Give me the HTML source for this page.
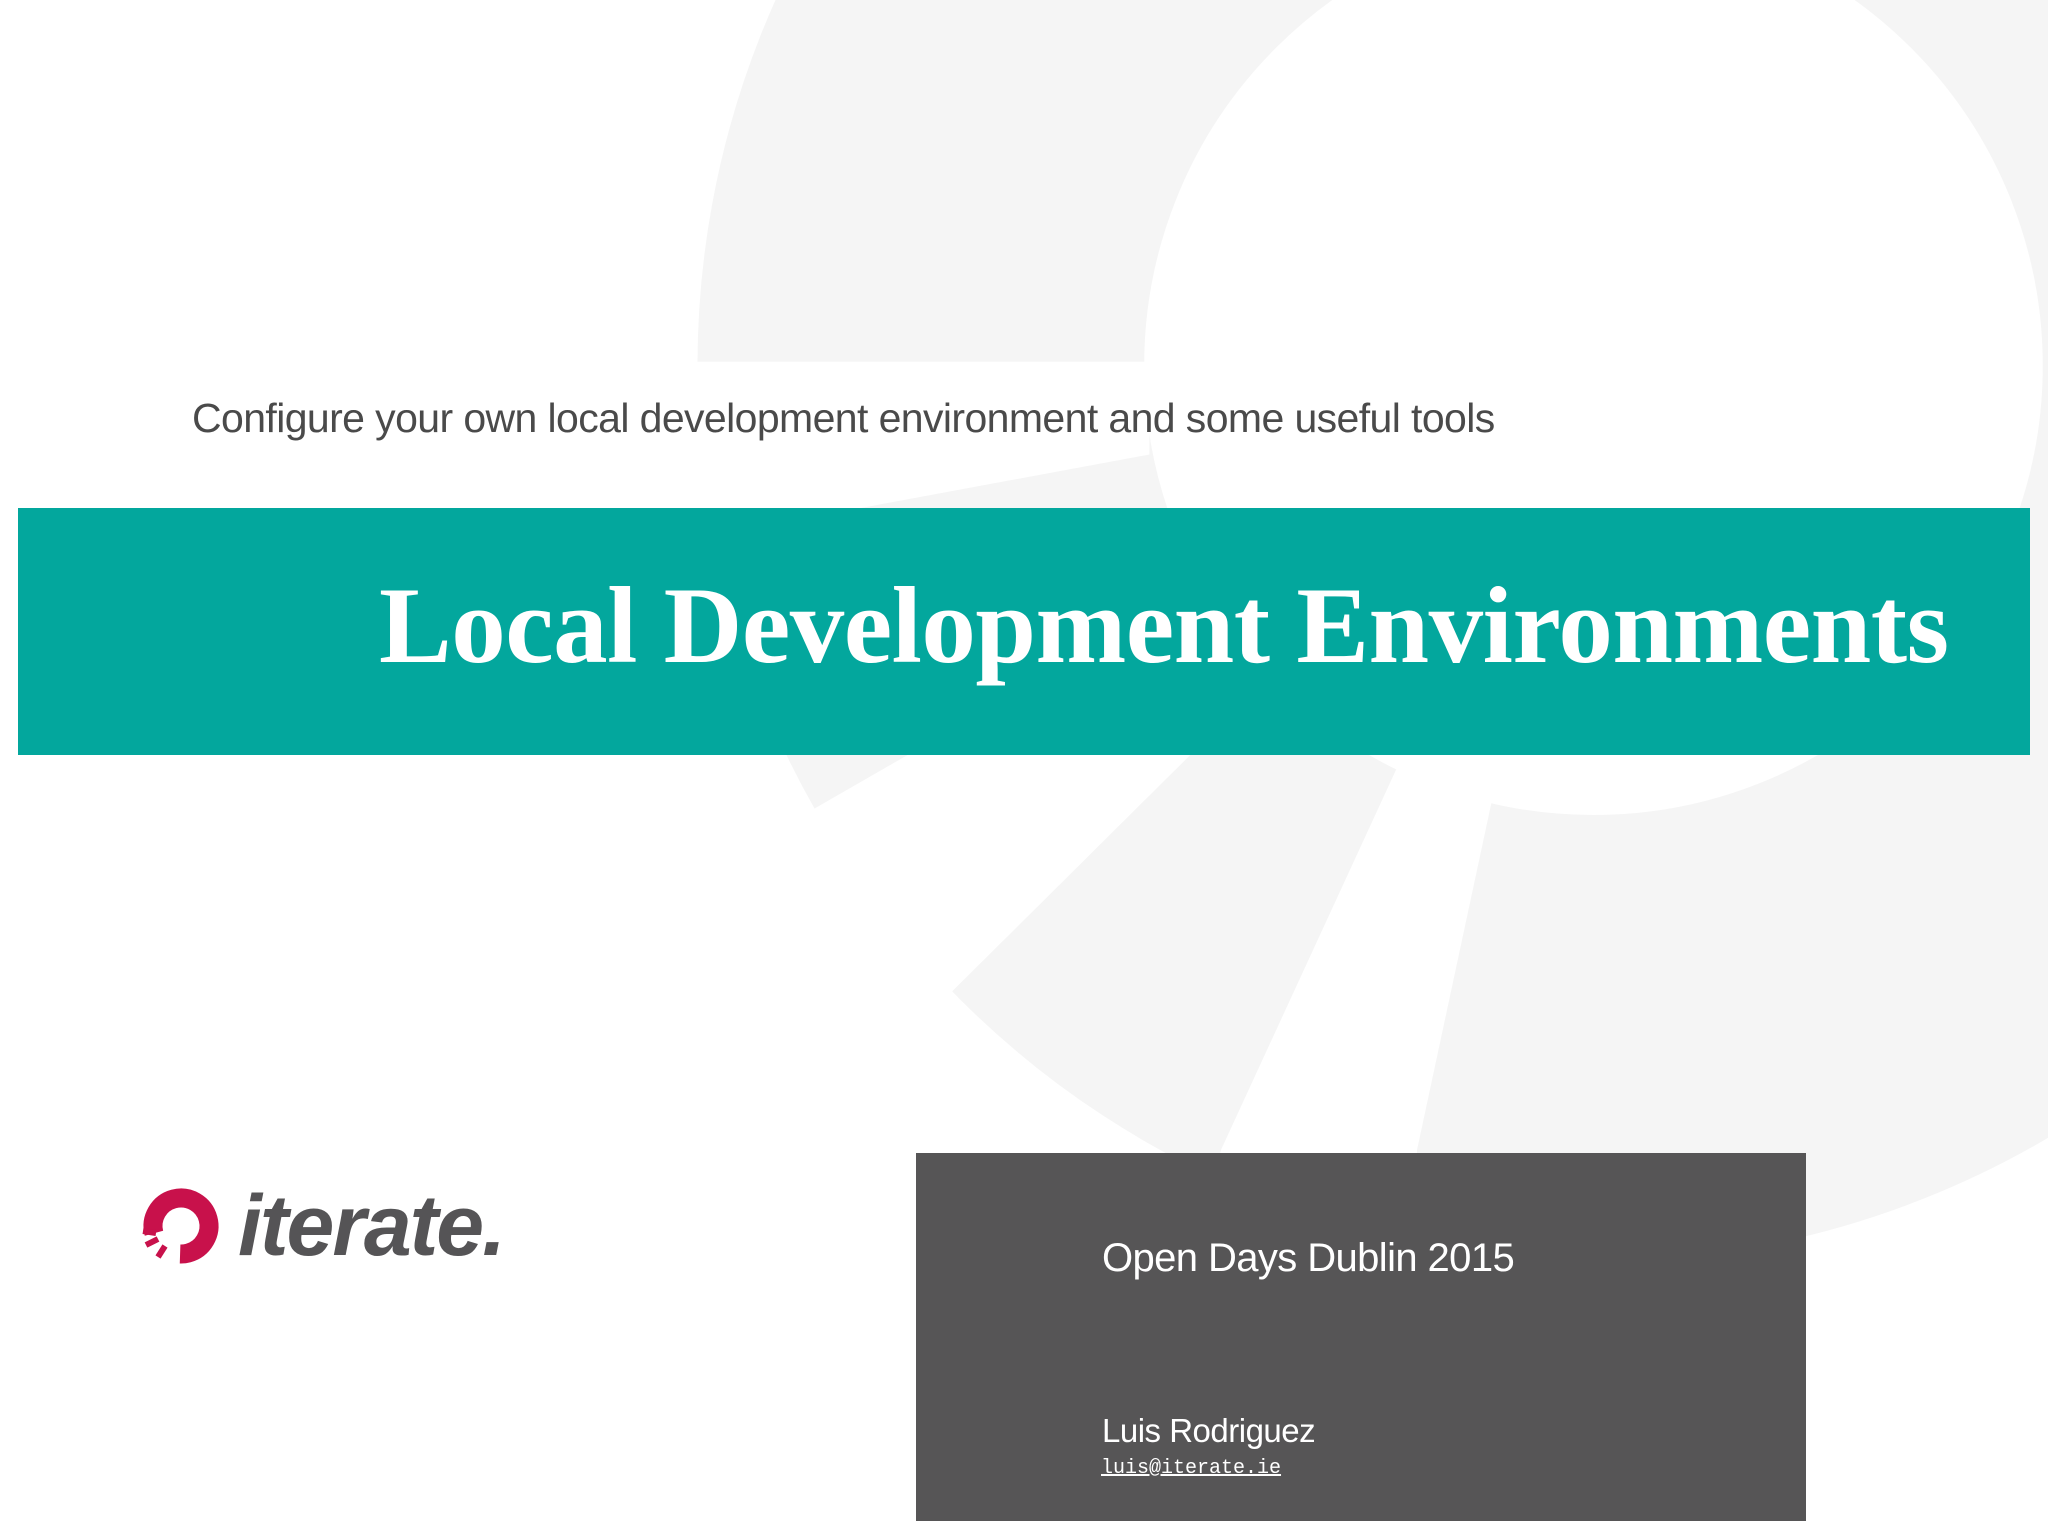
<!DOCTYPE html>
<html><head><meta charset="utf-8"><style>
html,body{margin:0;padding:0;}
body{width:2048px;height:1536px;position:relative;overflow:hidden;background:#fff;font-family:"Liberation Sans",sans-serif;}
svg.bg{position:absolute;left:0;top:0;}
.t{position:absolute;white-space:nowrap;line-height:1;}
</style></head><body>
<svg class="bg" width="2048" height="1536" viewBox="0 0 1568 1176" preserveAspectRatio="none">
<circle cx="1220" cy="280" r="515" fill="none" stroke="#f5f5f5" stroke-width="342"/>
<polygon fill="#fff" points="470,277 880,277 880,348 680,385 470,425"/>
<polygon fill="#fff" points="622,620 900,460 1000,490 728,760 560,800"/>
<polygon fill="#fff" points="1110,500 1160,530 1085,880 1075,1000 900,1000 935,880"/>
</svg>
<div class="t" style="left:192px;top:398px;font-size:41px;color:#4a4a4a;letter-spacing:-0.6px;">Configure your own local development environment and some useful tools</div>
<div style="position:absolute;left:18px;top:508px;width:2012px;height:247px;background:#03a79d;"></div>
<div class="t" style="left:379px;top:571px;font-family:'Liberation Serif',serif;font-weight:bold;font-size:109px;color:#fff;letter-spacing:-0.5px;">Local Development Environments</div>
<div style="position:absolute;left:916px;top:1153px;width:890px;height:368px;background:#565556;"></div>
<div class="t" style="left:1102px;top:1238px;font-size:40px;color:#fff;letter-spacing:-0.6px;">Open Days Dublin 2015</div>
<div class="t" style="left:1102px;top:1414px;font-size:33px;color:#fff;letter-spacing:-0.5px;">Luis Rodriguez</div>
<div class="t" style="left:1101px;top:1459px;font-family:'Liberation Mono',monospace;font-size:20px;color:#fff;text-decoration:underline;">luis@iterate.ie</div>
<svg style="position:absolute;left:136px;top:1181px;" width="90" height="90" viewBox="0 0 90 90">
<circle cx="45" cy="45" r="28" fill="none" stroke="#c8114b" stroke-width="19" stroke-dasharray="140 36" transform="rotate(-195 45 45)"/>
<path d="M7 50 L20 52" stroke="#c8114b" stroke-width="6"/>
<path d="M10 64 L22 58" stroke="#c8114b" stroke-width="6"/>
<path d="M22 76 L29 65" stroke="#c8114b" stroke-width="6"/>
</svg>
<div class="t" style="left:238px;top:1183px;font-weight:bold;font-style:italic;font-size:86px;color:#555456;letter-spacing:-2px;">iterate.</div>
</body></html>
